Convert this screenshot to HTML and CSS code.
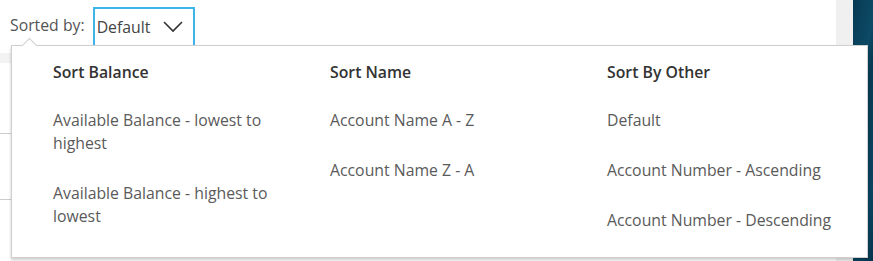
FILE: index.html
```html
<!DOCTYPE html>
<html lang="en">

<head>
  <meta charset="UTF-8">
  <meta name="viewport" content="width=device-width, initial-scale=1.0">
  <title>Accounts - Sort</title>
  <link rel="stylesheet" href="styles.css">
</head>

<body>
  <div class="page">
    <div class="main">
      <div class="content">
        <div class="toolbar">
          <span class="sort-label">Sorted by:</span>
          <div class="sort-select">
            <span>Default</span>
            <svg class="chevron" width="20" height="12" viewBox="0 0 20 12">
              <path d="M1 1 L10 10 L19 1" fill="none" stroke="#333" stroke-width="1.6"/>
            </svg>
          </div>
        </div>

        <div class="list">
          <div class="list-head"></div>
          <div class="list-row"></div>
          <div class="list-row"></div>
          <div class="list-row"></div>
        </div>

        <!-- sort dropdown panel -->
        <div class="sort-menu">
          <div class="sort-col">
            <h3>Sort Balance</h3>
            <a href="#">Available Balance - lowest to highest</a>
            <a href="#">Available Balance - highest to lowest</a>
          </div>
          <div class="sort-col">
            <h3>Sort Name</h3>
            <a href="#">Account Name A - Z</a>
            <a href="#">Account Name Z - A</a>
          </div>
          <div class="sort-col sort-col-last">
            <h3>Sort By Other</h3>
            <a href="#">Default</a>
            <a href="#">Account Number - Ascending</a>
            <a href="#">Account Number - Descending</a>
          </div>
        </div>
      </div>
      <div class="scroll-track"></div>
    </div>
    <div class="sidebar"></div>
  </div>
</body>

</html>
```

FILE: styles.css
```css
body {
  font-family: 'Open Sans', 'Liberation Sans', sans-serif;
  margin: 0;
  padding: 0;
  background-color: #ffffff;
  color: #555555;
}

.page {
  display: flex;
  height: 261px;
  overflow: hidden;
}

.main {
  flex: 1;
  display: flex;
}

.content {
  flex: 1;
  position: relative;
}

.scroll-track {
  width: 17px;
  background-color: #f0f0f0;
}

.sidebar {
  width: 20px;
  background: linear-gradient(100deg, #083a52 0%, #0c4a66 35%, #083a52 45%, #0a4360 80%, #07354c 100%);
}

.toolbar {
  display: flex;
  align-items: flex-start;
  padding: 7px 0 0 10px;
  height: 38px;
}

.sort-label {
  font-size: 15.8px;
  color: #555555;
  line-height: 36px;
  margin-right: 8px;
}

.sort-select {
  display: flex;
  align-items: flex-start;
  justify-content: space-between;
  width: 86px;
  height: 44px;
  padding: 0 10px 0 2px;
  border: 2px solid #3db5ea;
  border-bottom: none;
  font-size: 15.8px;
  color: #444444;
  box-sizing: content-box;
}

.sort-select span {
  line-height: 36px;
}

.chevron {
  margin-top: 12px;
}

.list-head {
  margin-top: 8px;
  height: 10px;
  background-color: #f3f3f3;
}

.list-row {
  height: 65px;
  border-bottom: 1px solid #cccccc;
}

.list-head + .list-row {
  height: 70px;
}

.sort-menu {
  position: absolute;
  top: 45px;
  left: 11px;
  width: 814px;
  height: 196px;
  padding: 15px 0 0 41px;
  display: grid;
  grid-template-columns: 277px 277px 1fr;
  background-color: #ffffff;
  border: 1px solid #cfcfcf;
  box-shadow: 0 2px 3px rgba(0, 0, 0, 0.2);
}

.sort-menu::before {
  content: "";
  position: absolute;
  top: -6px;
  left: 12px;
  width: 10px;
  height: 10px;
  background-color: #ffffff;
  border-top: 1px solid #cfcfcf;
  border-left: 1px solid #cfcfcf;
  transform: rotate(45deg);
}

.sort-col {
  display: flex;
  flex-direction: column;
  align-items: flex-start;
  gap: 25px;
  padding-right: 40px;
}

.sort-col-last {
  padding-right: 0;
}

.sort-col a + a {
  margin-top: 2px;
}

.sort-col h3 {
  margin: 0;
  font-size: 15.8px;
  font-weight: 600;
  line-height: 23px;
  color: #333333;
}

.sort-col a {
  font-size: 15.8px;
  line-height: 23px;
  color: #5a5a5a;
  text-decoration: none;
}
```
